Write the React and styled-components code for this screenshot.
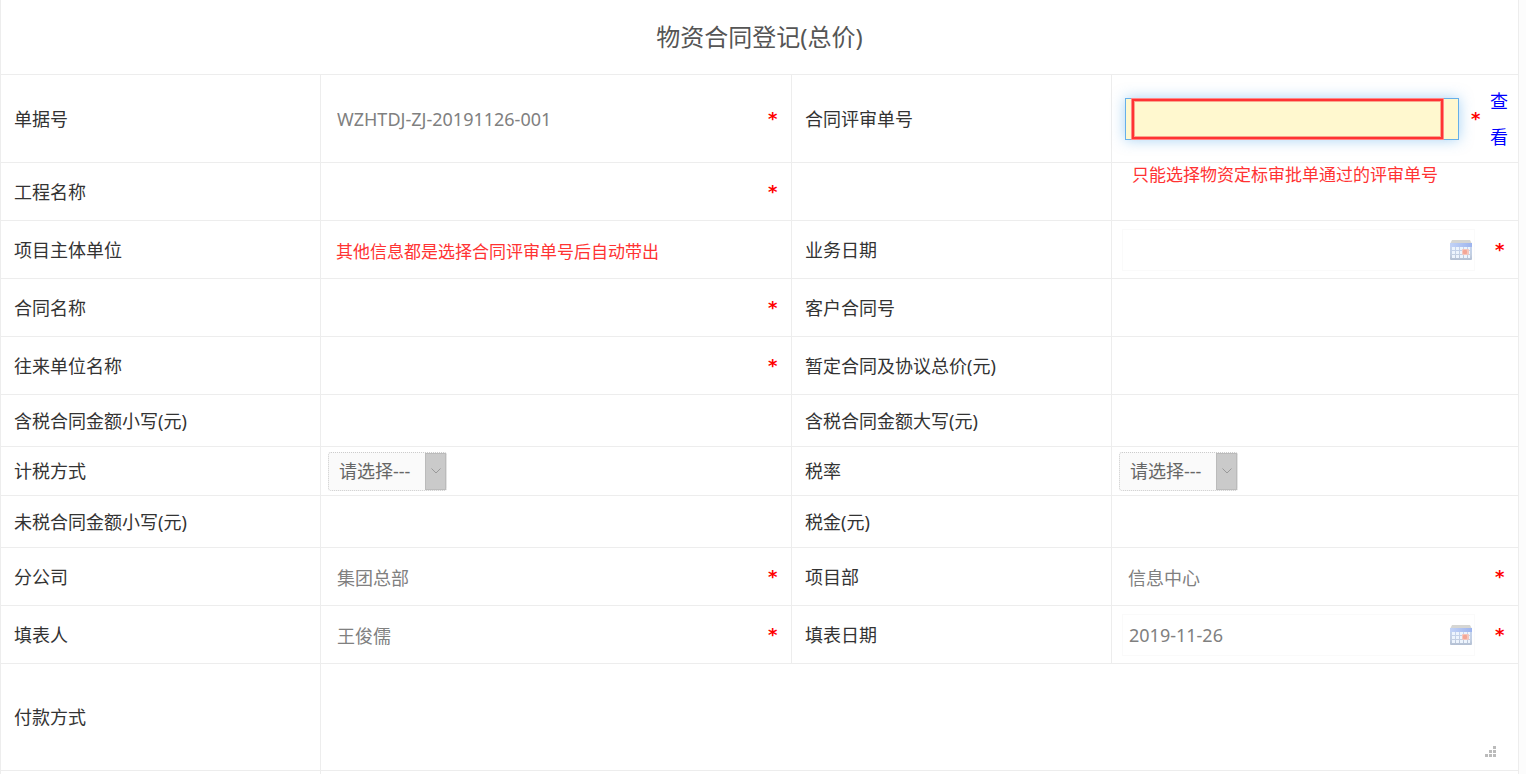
import React, { useState } from 'react';
import styled, { createGlobalStyle } from 'styled-components';

const GlobalStyle = createGlobalStyle`
  * {
    box-sizing: border-box;
  }
  body {
    margin: 0;
    background: #fcfcfc;
    color: #333;
    font-family: "Noto Sans", "Noto Sans CJK SC", sans-serif;
    font-size: 18px;
    line-height: 24px;
  }
`;

const Page = styled.main`
  min-height: 100vh;
  padding-right: 7px;
  display: flex;
`;

const Form = styled.form`
  flex: 1;
  display: flex;
  flex-direction: column;
  background: #fff;
  border-left: 1px solid #ededed;
`;

const Title = styled.h1`
  margin: 0;
  padding: 19px 0;
  border-right: 1px solid #ededed;
  border-bottom: 1px solid #ededed;
  color: #555;
  font-size: 24px;
  font-weight: 400;
  line-height: 36px;
  text-align: center;
`;

const Row = styled.div`
  display: grid;
  grid-template-columns: ${p => (p.$wide ? '320px minmax(0, 1fr)' : '320px minmax(0, 471fr) 320px minmax(0, 407fr)')};
  min-height: ${p => p.$height || 58}px;
`;

const Tail = styled(Row)`
  flex: 1;
  min-height: 0;
`;

const Cell = styled.div`
  display: flex;
  align-items: center;
  padding: 0 13px 0 7px;
  border-right: 1px solid #ededed;
  border-bottom: ${p => (p.$open ? '0' : '1px')} solid #ededed;
`;

const LabelCell = styled(Cell)`
  padding: 0 13px;
`;

const ReviewCell = styled(Cell)`
  padding: 0 10px 0 13px;
`;

const HintCell = styled(Cell)`
  align-items: flex-start;
  padding-left: 20px;
`;

const AreaCell = styled(Cell)`
  position: relative;
  align-items: stretch;
`;

const Input = styled.input`
  flex: 1;
  min-width: 0;
  height: 42px;
  padding: 0 9px;
  border: 0;
  background: transparent;
  color: #808080;
  font: inherit;
  outline: none;
`;

const Star = styled.span`
  width: 10px;
  color: #f00;
  font-family: "DejaVu Sans", sans-serif;
  font-weight: 700;
  line-height: 24px;
`;

const Hint = styled.span`
  color: #f33;
  font-size: 17px;
`;

const NoteInput = styled(Input)`
  color: #f33;
  font-size: 17px;
  padding: 2px 8px 0;
`;

const DateBox = styled.div`
  flex: 1;
  min-width: 0;
  height: 42px;
  margin: 0 20px 0 3px;
  padding-right: 2px;
  display: flex;
  align-items: center;
  border: 1px solid #fafafa;
`;

const DateInput = styled(Input)`
  height: 40px;
  padding: 0 6px;
`;

const IconButton = styled.button`
  display: flex;
  padding: 0;
  border: 0;
  background: transparent;
`;

const ReviewBox = styled.div`
  position: relative;
  flex: 1;
  min-width: 0;
  display: flex;
`;

const ReviewInput = styled(Input)`
  border: 1px solid #66afe9;
  background: #fff8cf;
  box-shadow: 0 0 14px rgba(82, 168, 236, 0.5);
`;

const Mark = styled.span`
  position: absolute;
  top: 0;
  bottom: 0;
  left: 6px;
  right: 15px;
  border: 1px solid #f88;
  box-shadow: inset 0 0 0 2px #f33, inset 0 0 0 3px #faa58f;
  pointer-events: none;
`;

const ReviewStar = styled(Star)`
  margin: 0 9px 0 12px;
`;

const ViewLink = styled.a`
  width: 18px;
  color: #00f;
  line-height: 36px;
  text-decoration: none;
`;

const SelectBox = styled.div`
  position: relative;
  display: flex;
  width: 119px;
`;

const Select = styled.select`
  width: 100%;
  height: 39px;
  padding: 0 0 0 10px;
  border: 1px dotted #ccc;
  border-radius: 3px;
  appearance: none;
  background: #fafafa;
  color: #666;
  font: inherit;
  outline: none;
`;

const SelectArrow = styled.span`
  position: absolute;
  top: 1px;
  right: 1px;
  bottom: 1px;
  width: 21px;
  display: flex;
  align-items: center;
  justify-content: center;
  border: 1px solid #bbb;
  background: #cacaca;
  pointer-events: none;
`;

const Textarea = styled.textarea`
  flex: 1;
  min-width: 0;
  padding: 9px;
  border: 0;
  background: transparent;
  color: #808080;
  font: inherit;
  outline: none;
  resize: none;
`;

const Grip = styled.svg`
  position: absolute;
  right: 22px;
  bottom: 13px;
`;

function CalendarIcon() {
  return (
    <svg width="22" height="20" viewBox="0 0 22 20" aria-hidden="true">
      <defs>
        <linearGradient id="calHead" x1="0" y1="0" x2="1" y2="0">
          <stop offset="0" stopColor="#c3d3f6" />
          <stop offset="1" stopColor="#9db4ee" />
        </linearGradient>
        <linearGradient id="calBody" x1="0" y1="0" x2="0" y2="1">
          <stop offset="0" stopColor="#c6d6f3" />
          <stop offset="0.7" stopColor="#c3cfe2" />
          <stop offset="1" stopColor="#b3bfd2" />
        </linearGradient>
      </defs>
      <path d="M2 0H20L22 4H0Z" fill="#d6d6d3" />
      <rect y="3" width="22" height="17" rx="1" fill="url(#calBody)" />
      <rect y="3" width="22" height="4" fill="url(#calHead)" />
      <path
        d="M2 7h3v3H2zM6 7h3v3H6zM10 7h3v3h-3zM14 7h3v3h-3zM18 7h2v3h-2zM2 11h3v3H2zM6 11h3v3H6zM10 11h3v3h-3zM18 11h2v3h-2zM2 15h3v3H2zM6 15h3v3H6zM10 15h3v3h-3zM14 15h3v3h-3zM18 15h2v3h-2z"
        fill="#edf4fd"
      />
      <rect x="12" y="9" width="7" height="6" rx="1" fill="#f5c6bd" />
      <rect x="13" y="10" width="4" height="4" rx="1" fill="#f3a696" />
    </svg>
  );
}

function TextField({ id, label, defaultValue, required, children }) {
  return (
    <>
      <LabelCell><label htmlFor={id}>{label}</label></LabelCell>
      <Cell>
        {children || <Input id={id} defaultValue={defaultValue} />}
        {required && <Star>*</Star>}
      </Cell>
    </>
  );
}

function DateField({ id, label, defaultValue }) {
  return (
    <TextField id={id} label={label} required>
      <DateBox>
        <DateInput id={id} defaultValue={defaultValue} />
        <IconButton type="button" aria-label="选择日期"><CalendarIcon /></IconButton>
      </DateBox>
    </TextField>
  );
}

function SelectField({ id, label }) {
  return (
    <TextField id={id} label={label}>
      <SelectBox>
        <Select id={id}>
          <option>请选择---</option>
        </Select>
        <SelectArrow>
          <svg width="10" height="6" viewBox="0 0 10 6" fill="none" stroke="#999">
            <path d="M0.5 0.5L5 5L9.5 0.5" />
          </svg>
        </SelectArrow>
      </SelectBox>
    </TextField>
  );
}

function App() {
  const [reviewNo, setReviewNo] = useState('');

  return (
    <Page>
      <GlobalStyle />
      <Form>
        <Title>物资合同登记(总价)</Title>

        <Row $height={88}>
          <TextField id="billNo" label="单据号" defaultValue="WZHTDJ-ZJ-20191126-001" required />
          <LabelCell><label htmlFor="reviewNo">合同评审单号</label></LabelCell>
          <ReviewCell>
            <ReviewBox>
              <ReviewInput id="reviewNo" value={reviewNo} onChange={(e) => setReviewNo(e.target.value)} />
              <Mark />
            </ReviewBox>
            <ReviewStar>*</ReviewStar>
            <ViewLink href="#view">查看</ViewLink>
          </ReviewCell>
        </Row>

        <Row>
          <TextField id="project" label="工程名称" required />
          <LabelCell />
          <HintCell><Hint>只能选择物资定标审批单通过的评审单号</Hint></HintCell>
        </Row>

        <Row>
          <TextField id="mainUnit" label="项目主体单位">
            <NoteInput id="mainUnit" defaultValue="其他信息都是选择合同评审单号后自动带出" />
          </TextField>
          <DateField id="bizDate" label="业务日期" />
        </Row>

        <Row>
          <TextField id="contract" label="合同名称" required />
          <TextField id="customerNo" label="客户合同号" />
        </Row>

        <Row>
          <TextField id="partner" label="往来单位名称" required />
          <TextField id="tempTotal" label="暂定合同及协议总价(元)" />
        </Row>

        <Row $height={52}>
          <TextField id="taxedLower" label="含税合同金额小写(元)" />
          <TextField id="taxedUpper" label="含税合同金额大写(元)" />
        </Row>

        <Row $height={49}>
          <SelectField id="taxMode" label="计税方式" />
          <SelectField id="taxRate" label="税率" />
        </Row>

        <Row $height={52}>
          <TextField id="untaxed" label="未税合同金额小写(元)" />
          <TextField id="tax" label="税金(元)" />
        </Row>

        <Row>
          <TextField id="branch" label="分公司" defaultValue="集团总部" required />
          <TextField id="dept" label="项目部" defaultValue="信息中心" required />
        </Row>

        <Row>
          <TextField id="author" label="填表人" defaultValue="王俊儒" required />
          <DateField id="fillDate" label="填表日期" defaultValue="2019-11-26" />
        </Row>

        <Row $wide $height={107}>
          <LabelCell><label htmlFor="payment">付款方式</label></LabelCell>
          <AreaCell>
            <Textarea id="payment" />
            <Grip width="11" height="11" viewBox="0 0 11 11" fill="#bbb">
              <path d="M8 0h3v3H8zM4 4h3v3H4zM8 4h3v3H8zM0 8h3v3H0zM4 8h3v3H4zM8 8h3v3H8z" />
            </Grip>
          </AreaCell>
        </Row>

        <Tail $wide>
          <Cell $open />
          <Cell $open />
        </Tail>
      </Form>
    </Page>
  );
}

export default App;
